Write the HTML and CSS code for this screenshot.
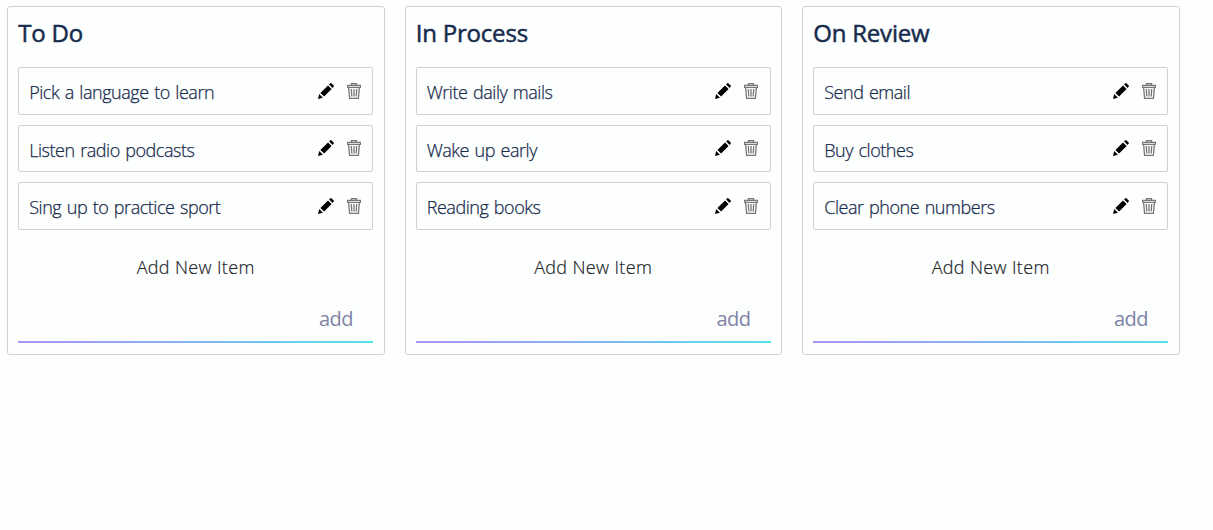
FILE: index.html
```
<!DOCTYPE html>
<html lang="en">
<head>
<meta charset="utf-8">
<title>Task Board</title>
<link rel="stylesheet" href="styles.css">
</head>
<body>
<svg class="sprite" width="0" height="0">
  <symbol id="pencil" viewBox="0 0 16 16">
    <path d="M0 16 1.2 11.1 4.9 14.8ZM2.4 9.9 10 2.4 13.6 6 6.1 13.6ZM11.1 1.4 12.3.3Q13 -.2 13.6.4L15.7 2.5Q16.2 3 15.7 3.6L14.6 4.9Z"/>
  </symbol>
  <symbol id="trash" viewBox="0 0 14 16">
    <path d="M4.5 2V.6H9.5V2M.5 4.3V2.4H13.5V4.3ZM1.6 4.5 2.6 15.4H11.4L12.4 4.5M4.3 6 4.8 13.5M7 6V13.5M9.7 6 9.2 13.5" fill="none" stroke="currentColor" stroke-width="1.3"/>
  </symbol>
</svg>
<main class="board">
  <section class="column">
    <h2 class="column-title">To Do</h2>
    <ul class="items">
      <li class="item"><span class="item-text">Pick a language to learn</span><svg class="edit"><use href="#pencil"/></svg><svg class="remove"><use href="#trash"/></svg></li>
      <li class="item"><span class="item-text">Listen radio podcasts</span><svg class="edit"><use href="#pencil"/></svg><svg class="remove"><use href="#trash"/></svg></li>
      <li class="item"><span class="item-text">Sing up to practice sport</span><svg class="edit"><use href="#pencil"/></svg><svg class="remove"><use href="#trash"/></svg></li>
    </ul>
    <div class="new-label">Add New Item</div>
    <div class="new-row"><span class="add">add</span></div>
  </section>
  <section class="column">
    <h2 class="column-title">In Process</h2>
    <ul class="items">
      <li class="item"><span class="item-text">Write daily mails</span><svg class="edit"><use href="#pencil"/></svg><svg class="remove"><use href="#trash"/></svg></li>
      <li class="item"><span class="item-text">Wake up early</span><svg class="edit"><use href="#pencil"/></svg><svg class="remove"><use href="#trash"/></svg></li>
      <li class="item"><span class="item-text">Reading books</span><svg class="edit"><use href="#pencil"/></svg><svg class="remove"><use href="#trash"/></svg></li>
    </ul>
    <div class="new-label">Add New Item</div>
    <div class="new-row"><span class="add">add</span></div>
  </section>
  <section class="column">
    <h2 class="column-title">On Review</h2>
    <ul class="items">
      <li class="item"><span class="item-text">Send email</span><svg class="edit"><use href="#pencil"/></svg><svg class="remove"><use href="#trash"/></svg></li>
      <li class="item"><span class="item-text">Buy clothes</span><svg class="edit"><use href="#pencil"/></svg><svg class="remove"><use href="#trash"/></svg></li>
      <li class="item"><span class="item-text">Clear phone numbers</span><svg class="edit"><use href="#pencil"/></svg><svg class="remove"><use href="#trash"/></svg></li>
    </ul>
    <div class="new-label">Add New Item</div>
    <div class="new-row"><span class="add">add</span></div>
  </section>
</main>
</body>
</html>
```
FILE: styles.css
```
* { box-sizing: border-box; }
body {
  margin: 0;
  background: #fdfefe;
  font-family: "Open Sans", "Noto Sans", sans-serif;
  color: #172b4d;
}
.sprite { display: block; }
.board {
  display: grid;
  grid-template-columns: repeat(3, 377.5px);
  gap: 20px;
  padding: 6px 0 0 7.2px;
}
.column {
  height: 349px;
  border: 1px solid #cfd1d3;
  border-radius: 3px;
  padding: 10px 10.6px 10px 10px;
}
.column-title {
  margin: 0 0 17px;
  height: 33px;
  font-size: 24px;
  line-height: 32px;
  font-weight: 400;
  letter-spacing: -0.2px;
  -webkit-text-stroke: 0.5px;
}
.items {
  list-style: none;
  margin: 0;
  padding: 0;
  display: flex;
  flex-direction: column;
  gap: 10px;
}
.item {
  display: flex;
  align-items: center;
  height: 47.5px;
  border: 1px solid #cfd1d3;
  border-radius: 2px;
  padding: 0 11.2px 0 10px;
}
.item-text {
  flex: 1;
  padding-top: 3px;
  font-size: 18px;
  line-height: 24px;
  font-weight: 300;
  letter-spacing: -0.46px;
  word-spacing: 1.3px;
  -webkit-text-stroke: 0.25px;
}
.edit { width: 16px; height: 16px; margin-right: 13px; fill: #000; }
.remove { width: 14px; height: 16px; color: #777; }
.new-label {
  margin-top: 24px;
  height: 26px;
  font-size: 18px;
  line-height: 26px;
  font-weight: 300;
  text-align: center;
  letter-spacing: 0.35px;
  color: #212529;
  -webkit-text-stroke: 0.2px;
}
.new-row {
  display: flex;
  justify-content: flex-end;
  margin-top: 13px;
  height: 50.5px;
  padding: 12px 20px 0 0;
  border-bottom: 2px solid;
  border-image: linear-gradient(90deg, #ac93f8, #84b3f2 50%, #53e3e4) 1;
}
.add {
  font-size: 20px;
  line-height: 28px;
  letter-spacing: -0.5px;
  color: #7e82a6;
}
```
